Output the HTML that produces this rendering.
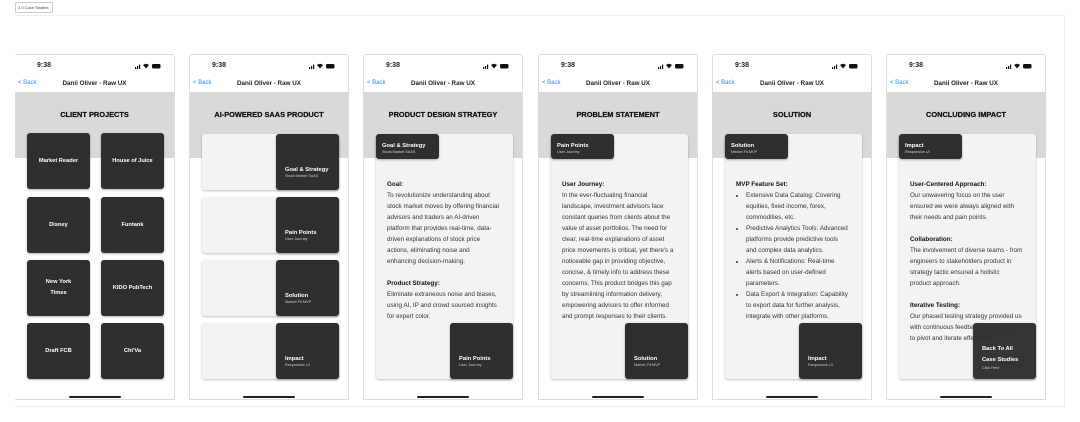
<!DOCTYPE html>
<html><head><style>
*{margin:0;padding:0;box-sizing:border-box}
body{width:1080px;height:422px;background:#fff;position:relative;overflow:hidden;font-family:"Liberation Sans",Arial,sans-serif;color:#222}
.lbl{position:absolute;left:15px;top:2px;width:38px;height:11px;border:1px solid #ccc;border-radius:1px;font-size:4px;line-height:9px;padding-left:2px;color:#444;white-space:nowrap;overflow:hidden}
.canvas{position:absolute;left:15px;top:15px;width:1050px;height:392px;border:1px solid #eee;border-left:none}
.ph{position:absolute;top:54px;width:160px;height:346px;border:1px solid #ddd;background:#fff;overflow:hidden;border-radius:3px 3px 0 0}
.t{position:absolute;left:22px;top:7px;font-size:7px;font-weight:bold}
.ic{position:absolute;right:12px;top:8px;width:27px;height:6px}
.back{position:absolute;left:3px;top:25px;font-size:6px;color:#3b82f6}
.nt{position:absolute;left:0;right:0;top:25px;text-align:center;font-size:6.3px;font-weight:bold;color:#222}
.band{position:absolute;left:0;right:0;top:37px;height:66px;background:#d9d9d9}
.h{position:absolute;left:0;right:0;top:55px;text-align:center;font-size:7.4px;font-weight:bold;color:#111;-webkit-text-stroke:.25px #111}
.hi{position:absolute;left:50%;margin-left:-26px;top:341px;width:52px;height:2px;background:#222;border-radius:1px}
.tile{position:absolute;width:63px;height:56px;background:#2f2f2f;border-radius:3px;box-shadow:0 1px 2px rgba(0,0,0,.3);color:#fff;font-size:5.7px;font-weight:bold;display:flex;align-items:center;justify-content:center;text-align:center;line-height:11px}
.lc{position:absolute;left:12px;width:137px;height:56px;background:#f3f3f3;border-radius:3px;box-shadow:0 1px 2px rgba(0,0,0,.25)}
.dk{position:absolute;background:#2f2f2f;border-radius:3px;color:#fff;box-shadow:0 1px 2px rgba(0,0,0,.3)}
.dk b{display:block;font-size:5.8px;line-height:8px}
.dk s{display:block;text-decoration:none;font-size:3.8px;color:#ccc;line-height:5px}
.card{position:absolute;left:12px;top:79px;width:137px;height:245px;background:#f3f3f3;border-radius:3px;box-shadow:0 1px 2px rgba(0,0,0,.25)}
.tab{position:absolute;left:0;top:0;width:63px;height:25px;padding:8px 0 0 6px}
.bx{position:absolute;right:0;bottom:0;width:63px;height:56px;padding:32px 0 0 9px}
.tx{position:absolute;left:11px;top:45px;width:120px;font-size:6.3px;line-height:11px;color:#333;white-space:nowrap}
.tx p{margin-bottom:11px}
.tx strong{color:#111}
.tx ul{padding-left:10px;list-style:disc}
</style></head><body>
<div class="lbl">3.0 Case Studies</div>
<div class="canvas"></div>

<div class="ph" style="left:15px;border-left:none">
<div class="t">9:38</div><svg class="ic" viewBox="0 0 27 6"><rect x="0" y="4" width="1.2" height="2" fill="#111"/><rect x="2" y="3" width="1.2" height="3" fill="#111"/><rect x="4" y="1.5" width="1.2" height="4.5" fill="#111"/><path d="M8 2 Q11 -0.5 14 2 L11 5.5Z" fill="#111"/><rect x="17" y="1" width="8.5" height="4.5" rx="1.2" fill="#111"/></svg>
<div class="back">&lt; Back</div><div class="nt">Danii Oliver - Raw UX</div>
<div class="band"></div><div class="h">CLIENT PROJECTS</div>
<div class="tile" style="left:12px;top:78px">Market Reader</div><div class="tile" style="left:86px;top:78px">House of Juice</div>
<div class="tile" style="left:12px;top:142px">Disney</div><div class="tile" style="left:86px;top:142px">Funtank</div>
<div class="tile" style="left:12px;top:205px">New York<br>Times</div><div class="tile" style="left:86px;top:205px">KIDO PubTech</div>
<div class="tile" style="left:12px;top:268px">Draft FCB</div><div class="tile" style="left:86px;top:268px">Chi'Va</div>
<div class="hi"></div></div>

<div class="ph" style="left:189px">
<div class="t">9:38</div><svg class="ic" viewBox="0 0 27 6"><rect x="0" y="4" width="1.2" height="2" fill="#111"/><rect x="2" y="3" width="1.2" height="3" fill="#111"/><rect x="4" y="1.5" width="1.2" height="4.5" fill="#111"/><path d="M8 2 Q11 -0.5 14 2 L11 5.5Z" fill="#111"/><rect x="17" y="1" width="8.5" height="4.5" rx="1.2" fill="#111"/></svg>
<div class="back">&lt; Back</div><div class="nt">Danii Oliver - Raw UX</div>
<div class="band"></div><div class="h">AI-POWERED SAAS PRODUCT</div>
<div class="lc" style="top:79px"></div><div class="dk bx" style="left:86px;top:79px;right:auto;bottom:auto"><b>Goal &amp; Strategy</b><s>Stock Market SAAS</s></div>
<div class="lc" style="top:142px"></div><div class="dk bx" style="left:86px;top:142px;right:auto;bottom:auto"><b>Pain Points</b><s>User Journey</s></div>
<div class="lc" style="top:205px"></div><div class="dk bx" style="left:86px;top:205px;right:auto;bottom:auto"><b>Solution</b><s>Market Fit MVP</s></div>
<div class="lc" style="top:268px"></div><div class="dk bx" style="left:86px;top:268px;right:auto;bottom:auto"><b>Impact</b><s>Responsive UI</s></div>
<div class="hi"></div></div>

<div class="ph" style="left:363px">
<div class="t">9:38</div><svg class="ic" viewBox="0 0 27 6"><rect x="0" y="4" width="1.2" height="2" fill="#111"/><rect x="2" y="3" width="1.2" height="3" fill="#111"/><rect x="4" y="1.5" width="1.2" height="4.5" fill="#111"/><path d="M8 2 Q11 -0.5 14 2 L11 5.5Z" fill="#111"/><rect x="17" y="1" width="8.5" height="4.5" rx="1.2" fill="#111"/></svg>
<div class="back">&lt; Back</div><div class="nt">Danii Oliver - Raw UX</div>
<div class="band"></div><div class="h">PRODUCT DESIGN STRATEGY</div>
<div class="card"><div class="dk tab"><b>Goal &amp; Strategy</b><s>Stock Market SAAS</s></div>
<div class="tx"><p><strong>Goal:</strong><br>To revolutionize understanding about<br>stock market moves by offering financial<br>advisors and traders an AI-driven<br>platform that provides real-time, data-<br>driven explanations of stock price<br>actions, eliminating noise and<br>enhancing decision-making.</p><p><strong>Product Strategy:</strong><br>Eliminate extraneous noise and biases,<br>using AI, IP and crowd sourced insights<br>for expert color.</p></div>
<div class="dk bx"><b>Pain Points</b><s>User Journey</s></div></div>
<div class="hi"></div></div>

<div class="ph" style="left:538px">
<div class="t">9:38</div><svg class="ic" viewBox="0 0 27 6"><rect x="0" y="4" width="1.2" height="2" fill="#111"/><rect x="2" y="3" width="1.2" height="3" fill="#111"/><rect x="4" y="1.5" width="1.2" height="4.5" fill="#111"/><path d="M8 2 Q11 -0.5 14 2 L11 5.5Z" fill="#111"/><rect x="17" y="1" width="8.5" height="4.5" rx="1.2" fill="#111"/></svg>
<div class="back">&lt; Back</div><div class="nt">Danii Oliver - Raw UX</div>
<div class="band"></div><div class="h">PROBLEM STATEMENT</div>
<div class="card"><div class="dk tab"><b>Pain Points</b><s>User Journey</s></div>
<div class="tx"><p><strong>User Journey:</strong><br>In the ever-fluctuating financial<br>landscape, investment advisors face<br>constant queries from clients about the<br>value of asset portfolios. The need for<br>clear, real-time explanations of asset<br>price movements is critical, yet there's a<br>noticeable gap in providing objective,<br>concise, &amp; timely info to address these<br>concerns. This product bridges this gap<br>by streamlining information delivery,<br>empowering advisors to offer informed<br>and prompt responses to their clients.</p></div>
<div class="dk bx"><b>Solution</b><s>Market Fit MVP</s></div></div>
<div class="hi"></div></div>

<div class="ph" style="left:712px">
<div class="t">9:38</div><svg class="ic" viewBox="0 0 27 6"><rect x="0" y="4" width="1.2" height="2" fill="#111"/><rect x="2" y="3" width="1.2" height="3" fill="#111"/><rect x="4" y="1.5" width="1.2" height="4.5" fill="#111"/><path d="M8 2 Q11 -0.5 14 2 L11 5.5Z" fill="#111"/><rect x="17" y="1" width="8.5" height="4.5" rx="1.2" fill="#111"/></svg>
<div class="back">&lt; Back</div><div class="nt">Danii Oliver - Raw UX</div>
<div class="band"></div><div class="h">SOLUTION</div>
<div class="card"><div class="dk tab"><b>Solution</b><s>Market Fit MVP</s></div>
<div class="tx"><strong>MVP Feature Set:</strong><ul><li>Extensive Data Catalog: Covering<br>equities, fixed income, forex,<br>commodities, etc.</li><li>Predictive Analytics Tools: Advanced<br>platforms provide predictive tools<br>and complex data analytics.</li><li>Alerts &amp; Notifications: Real-time<br>alerts based on user-defined<br>parameters.</li><li>Data Export &amp; Integration: Capability<br>to export data for further analysis,<br>integrate with other platforms.</li></ul></div>
<div class="dk bx"><b>Impact</b><s>Responsive UI</s></div></div>
<div class="hi"></div></div>

<div class="ph" style="left:886px">
<div class="t">9:38</div><svg class="ic" viewBox="0 0 27 6"><rect x="0" y="4" width="1.2" height="2" fill="#111"/><rect x="2" y="3" width="1.2" height="3" fill="#111"/><rect x="4" y="1.5" width="1.2" height="4.5" fill="#111"/><path d="M8 2 Q11 -0.5 14 2 L11 5.5Z" fill="#111"/><rect x="17" y="1" width="8.5" height="4.5" rx="1.2" fill="#111"/></svg>
<div class="back">&lt; Back</div><div class="nt">Danii Oliver - Raw UX</div>
<div class="band"></div><div class="h">CONCLUDING IMPACT</div>
<div class="card"><div class="dk tab"><b>Impact</b><s>Responsive UI</s></div>
<div class="tx"><p><strong>User-Centered Approach:</strong><br>Our unwavering focus on the user<br>ensured we were always aligned with<br>their needs and pain points.</p><p><strong>Collaboration:</strong><br>The involvement of diverse teams - from<br>engineers to stakeholders product in<br>strategy tactic ensured a holistic<br>product approach.</p><p><strong>Iterative Testing:</strong><br>Our phased testing strategy provided us<br>with continuous feedback, allowing us<br>to pivot and iterate effectively.</p></div>
<div class="dk bx" style="padding-top:21px;opacity:.97"><b style="line-height:11px">Back To All<br>Case Studies</b><s>Click Here</s></div></div>
<div class="hi"></div></div>
</body></html>
